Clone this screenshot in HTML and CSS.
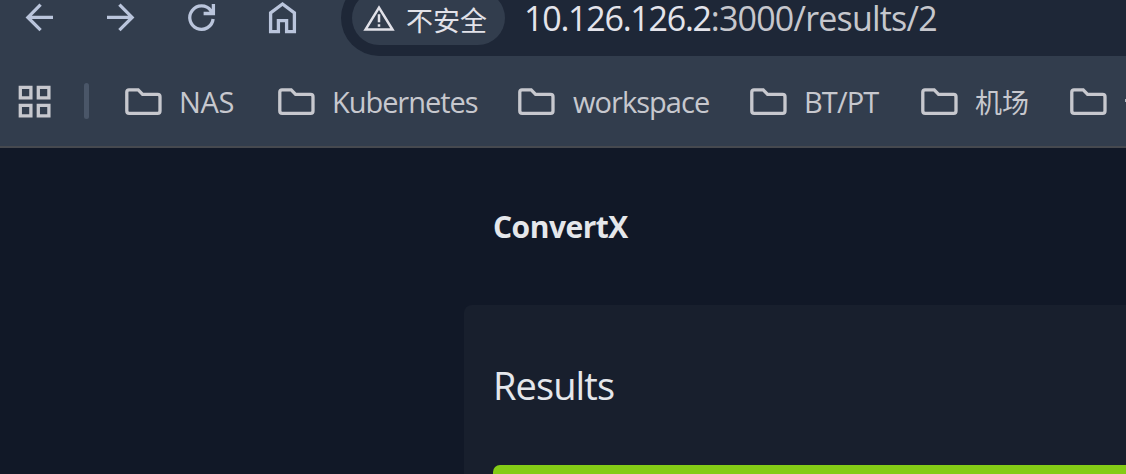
FILE: index.html
```html
<!DOCTYPE html>
<html lang="zh-CN">
<head>
<meta charset="utf-8">
<title>ConvertX | Results</title>
<link rel="stylesheet" href="styles.css">
</head>
<body>
<svg class="defs" width="0" height="0">
  <symbol id="folder" viewBox="0 0 37 28">
    <path d="M4 1.9H13.2L17.6 6.3H32.6Q35 6.3 35 8.7V22.9Q35 25.3 32.6 25.3H4.2Q1.8 25.3 1.8 22.9V4.1Q1.8 1.9 4 1.9Z" fill="none" stroke="currentColor" stroke-width="3.3"/>
  </symbol>
</svg>
<header class="browser">
  <div class="toolbar">
    <nav class="nav">
      <svg class="nav-icon" viewBox="19 -3 41 42"><path d="M53 17.4H28M40.6 4.7L27.9 17.4L40.6 30.1"/></svg>
      <svg class="nav-icon" viewBox="100 -3 41 42"><path d="M107 17.4H132M119.4 4.7L132.1 17.4L119.4 30.1"/></svg>
      <svg class="nav-icon" viewBox="181 -3 41 42"><path d="M213.1 19A11.7 11.7 0 1 1 210.9 10.7L213 13.2M213.4 4V13.5H203.6"/></svg>
      <svg class="nav-icon" viewBox="262 -3 41 42"><path d="M270.6 31.6V12.9L282.5 4L294.4 12.9V31.6H286.6V20.6H278.4V31.6Z"/></svg>
    </nav>
    <div class="omnibox">
      <div class="chip">
        <svg class="warn" viewBox="0 0 32 27"><path d="M2.5 24.6L16 2.6L29.5 24.6Z" fill="none" stroke="currentColor" stroke-width="2.5"/><path d="M16 9.2V17.2M16 19.2V21.8" fill="none" stroke="currentColor" stroke-width="2.5"/></svg>
        <span class="chip-text">不安全</span>
      </div>
      <div class="url"><span class="host">10.126.126.2</span><span class="path">:3000/results/2</span></div>
    </div>
  </div>
  <div class="bookmarks">
    <svg class="apps" viewBox="0 0 34 34"><path d="M2.3 2.3h10.6v10.6H2.3zM20.3 2.3h10.6v10.6H20.3zM2.3 20.3h10.6v10.6H2.3zM20.3 20.3h10.6v10.6H20.3z" fill="none" stroke="currentColor" stroke-width="3.3"/></svg>
    <span class="divider"></span>
    <div class="bookmark nas"><svg class="folder"><use href="#folder"/></svg><span>NAS</span></div>
    <div class="bookmark kube"><svg class="folder"><use href="#folder"/></svg><span>Kubernetes</span></div>
    <div class="bookmark work"><svg class="folder"><use href="#folder"/></svg><span>workspace</span></div>
    <div class="bookmark bt"><svg class="folder"><use href="#folder"/></svg><span>BT/PT</span></div>
    <div class="bookmark airport"><svg class="folder"><use href="#folder"/></svg><span>机场</span></div>
    <div class="bookmark last"><svg class="folder"><use href="#folder"/></svg><i class="cut"></i></div>
  </div>
</header>
<main class="page">
  <div class="brand"><span>ConvertX</span></div>
  <section class="card">
    <h1 class="title">Results</h1>
    <div class="progress"></div>
  </section>
</main>
</body>
</html>
```
FILE: styles.css
```css
* { box-sizing: border-box; }
body {
  margin: 0;
  width: 1126px;
  height: 474px;
  overflow: hidden;
  background: #111827;
  font-family: "Open Sans", "Noto Sans CJK SC", sans-serif;
  white-space: nowrap;
}
.defs { display: block; }
.browser {
  display: flow-root;
  height: 148px;
  background: #323d4d;
  border-bottom: 2px solid #46494f;
}
.toolbar {
  display: flex;
  align-items: center;
  height: 76px;
  margin-top: -20px;
}
.nav { display: flex; flex: none; gap: 40px; width: 341px; padding-left: 19px; }
.nav-icon { flex: none; width: 41px; height: 42px; fill: none; stroke: #bac5dc; stroke-width: 3.3; }
.omnibox {
  display: flex;
  align-items: center;
  flex: 1;
  height: 76px;
  padding-left: 11px;
  background: #1e2737;
  border-radius: 38px 0 0 38px;
}
.chip {
  display: flex;
  align-items: center;
  flex: none;
  width: 153px;
  height: 54px;
  padding-left: 11px;
  border-radius: 27px;
  background: #323d4d;
  color: #e2e2e9;
}
.warn { flex: none; width: 32px; height: 27px; }
.chip-text {
  margin: 4px 0 0 11px;
  font: 27px/36px "Noto Sans CJK SC", sans-serif;
}
.url { margin-left: 19px; font-size: 34px; line-height: 36px; letter-spacing: -1.25px; }
.host { color: #e4e4eb; }
.path { color: #c6c7cd; letter-spacing: -0.8px; }
.bookmarks { display: flex; align-items: center; height: 90px; padding: 2px 0 0 18px; color: #c7c8ce; }
.apps { flex: none; width: 34px; height: 34px; }
.divider { flex: none; width: 5px; height: 36px; margin: -2px 38px 0 32px; border-radius: 3px; background: #4a5668; }
.bookmark { display: flex; align-items: center; flex: none; font-size: 29px; line-height: 40px; }
.folder { flex: none; width: 37px; height: 28px; margin-right: 17px; }
.nas { width: 153px; letter-spacing: -0.3px; margin-left: -2px; }
.kube { width: 240px; letter-spacing: -1.05px; }
.work { width: 232px; letter-spacing: -0.95px; }
.work .folder { margin-right: 18px; }
.bt { width: 171px; letter-spacing: -0.9px; }
.airport { width: 149px; font-family: "Noto Sans CJK SC", sans-serif; font-size: 27px; }
.last { width: 56px; }
.cut { width: 2px; height: 3px; margin: -4px 0 0 1px; background: #aeb6bd; }
.page { color: #e5e7eb; }
.brand { height: 157px; padding: 58px 0 0 493px; font-size: 30px; line-height: 42px; font-weight: 700; letter-spacing: -0.5px; }
.card {
  height: 180px;
  margin-left: 464px;
  padding: 54px 0 0 29px;
  border-radius: 8px 0 0 0;
  background: #181f2d;
}
.title { margin: 0; height: 106px; font-size: 38px; line-height: 52px; font-weight: 400; letter-spacing: -0.9px; }
.progress { height: 20px; border-radius: 7px 0 0 7px; background: #84cc16; }
```
